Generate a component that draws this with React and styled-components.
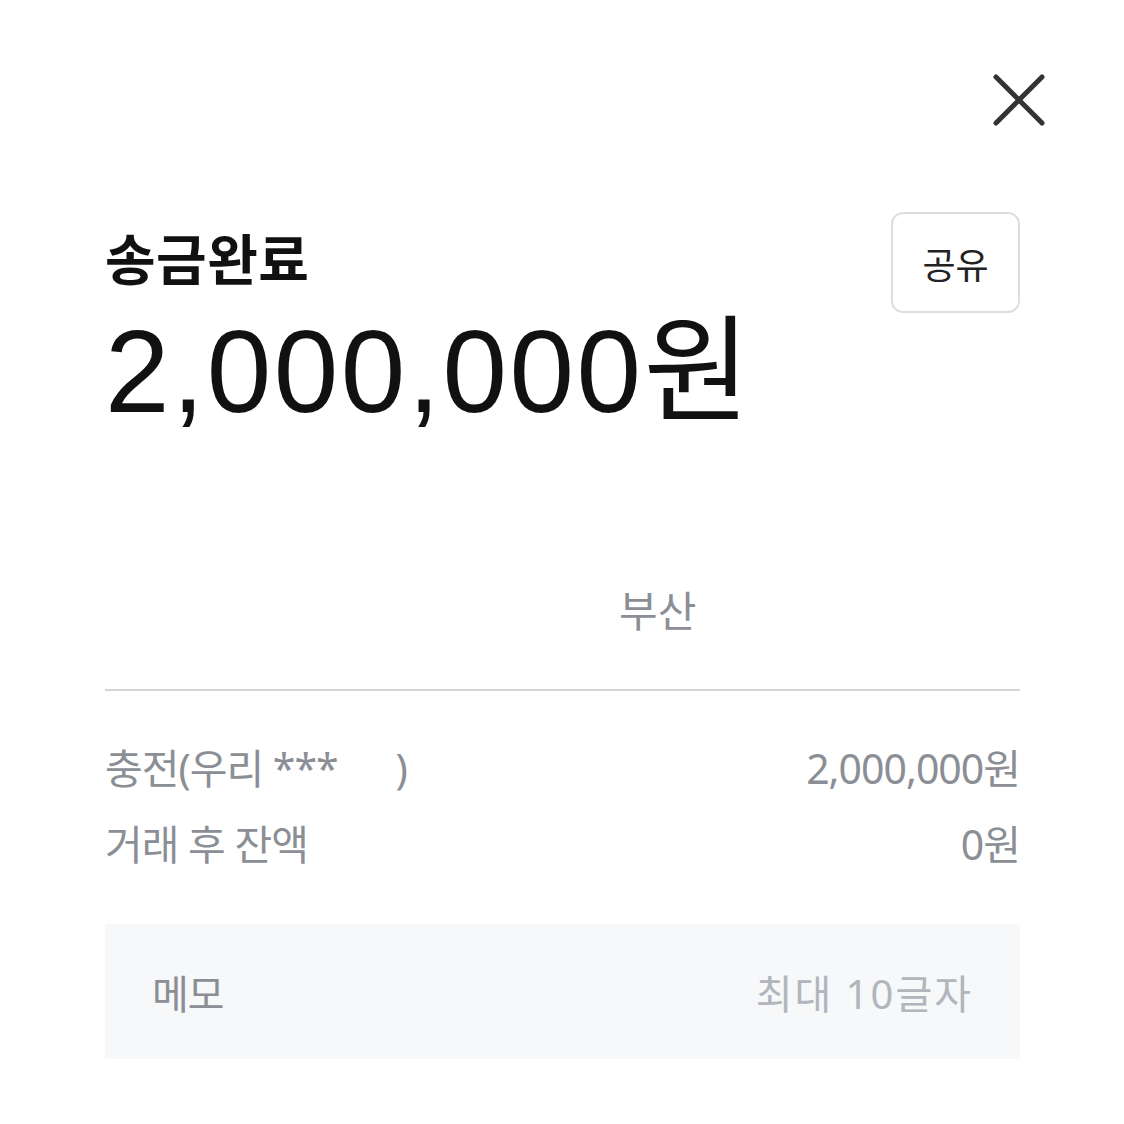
import React from 'react'
import styled, { createGlobalStyle } from 'styled-components'

const GlobalStyle = createGlobalStyle`
  html, body {
    margin: 0;
    padding: 0;
    background: #fff;
    font-family: 'Noto Sans', 'Noto Sans CJK KR', sans-serif;
  }
`

const Page = styled.div`
  width: 1124px;
  padding: 72px 104px 0 105px;
  box-sizing: border-box;
`

const TopBar = styled.div`
  display: flex;
  justify-content: flex-end;
  margin-right: -27px;
`

const CloseButton = styled.button`
  width: 56px;
  height: 56px;
  padding: 0;
  border: none;
  background: none;
  display: flex;
  align-items: center;
  justify-content: center;
`

const Header = styled.div`
  display: flex;
  justify-content: space-between;
  align-items: flex-start;
  margin-top: 84px;
`

const TitleBlock = styled.div`
  display: flex;
  flex-direction: column;
  padding-top: 15px;
`

const Title = styled.h1`
  margin: 0;
  font-family: 'Noto Sans CJK KR', sans-serif;
  font-size: 55px;
  font-weight: 700;
  line-height: 58px;
  letter-spacing: 0.5px;
  color: #111;
`

const Amount = styled.div`
  margin-top: 22px;
  font-family: 'Liberation Sans', 'Noto Sans CJK KR', sans-serif;
  font-size: 116px;
  font-weight: 400;
  line-height: 130px;
  letter-spacing: 2.5px;
  color: #111;
`

const ShareButton = styled.button`
  width: 129px;
  height: 101px;
  border: 2px solid #dedede;
  border-radius: 12px;
  background: #fff;
  font-family: 'Noto Sans CJK KR', sans-serif;
  font-size: 36px;
  color: #222;
  padding: 0;
`

const Recipient = styled.div`
  display: flex;
  padding-left: 514px;
  margin-top: 144px;
  padding-bottom: 52px;
  border-bottom: 2px solid #d3d4d6;
`

const RecipientName = styled.span`
  font-family: 'Noto Sans CJK KR', sans-serif;
  font-size: 42px;
  line-height: 56px;
  color: #8b8f95;
`

const Details = styled.div`
  display: flex;
  flex-direction: column;
  gap: 20px;
  margin-top: 49px;
`

const Row = styled.div`
  display: flex;
  justify-content: space-between;
  align-items: center;
  font-size: 41px;
  line-height: 56px;
  letter-spacing: -1px;
  color: #8b8f95;
`

const Memo = styled.div`
  display: flex;
  justify-content: space-between;
  align-items: center;
  margin-top: 52px;
  height: 135px;
  padding: 0 47px;
  background: #f7f8fa;
  font-size: 40px;
`

const MemoLabel = styled.span`
  color: #8b8f95;
  letter-spacing: -1px;
`

const MemoPlaceholder = styled.span`
  color: #b2b6bc;
  letter-spacing: 2px;
`

const CloseIcon = () => (
  <svg width="56" height="56" viewBox="0 0 56 56">
    <path
      d="M5 5 L51 51 M51 5 L5 51"
      stroke="#333"
      strokeWidth="5"
      strokeLinecap="round"
      fill="none"
    />
  </svg>
)

export default function App() {
  return (
    <Page>
      <GlobalStyle />
      <TopBar>
        <CloseButton>
          <CloseIcon />
        </CloseButton>
      </TopBar>
      <Header>
        <TitleBlock>
          <Title>송금완료</Title>
          <Amount>2,000,000원</Amount>
        </TitleBlock>
        <ShareButton>공유</ShareButton>
      </Header>
      <Recipient>
        <RecipientName>부산</RecipientName>
      </Recipient>
      <Details>
        <Row>
          <span>충전(우리 ***&nbsp;&nbsp;&nbsp;&nbsp;&nbsp;&nbsp;)</span>
          <span>2,000,000원</span>
        </Row>
        <Row>
          <span>거래 후 잔액</span>
          <span>0원</span>
        </Row>
      </Details>
      <Memo>
        <MemoLabel>메모</MemoLabel>
        <MemoPlaceholder>최대 10글자</MemoPlaceholder>
      </Memo>
    </Page>
  )
}
